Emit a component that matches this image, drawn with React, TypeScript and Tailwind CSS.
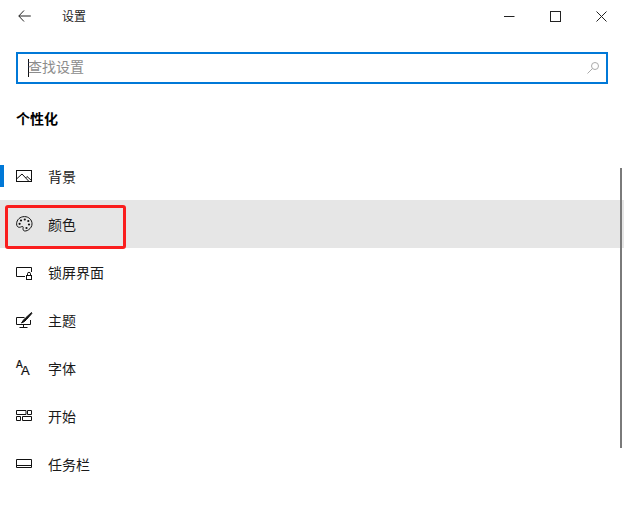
import type { ReactNode } from "react";

function Row({ label, active, selected, children }: { label: string; active?: boolean; selected?: boolean; children: ReactNode }) {
  return (
    <div className={`relative flex h-12 items-center pl-4 ${selected ? "bg-[#e6e6e6]" : ""}`}>
      {active && <div className="absolute left-0 top-[13px] h-[22px] w-1 bg-[#0078d7]" />}
      <svg width="16" height="16" viewBox="0 0 16 16" fill="none" stroke="#111" strokeWidth="1" className="shrink-0 overflow-visible">
        {children}
      </svg>
      <span className="ml-4 text-sm leading-5 text-[#1a1a1a]">{label}</span>
    </div>
  );
}

export default function App() {
  return (
    <div className="relative h-[511px] w-[624px] overflow-hidden bg-white font-['Noto_Sans_CJK_SC','Liberation_Sans',sans-serif]">
      <header className="flex h-8 items-center justify-between">
        <div className="flex items-center">
          <svg width="13" height="12" viewBox="0 0 13 12" fill="none" stroke="#222" strokeWidth="1" className="ml-[18px] mt-[-1px]">
            <path d="M6 .5 .8 6l5.200 5.500M.8 6h12" />
          </svg>
          <span className="ml-[31px] text-xs leading-4 text-[#222]">设置</span>
        </div>
        <div className="mr-[17px] flex items-center">
          <svg width="11" height="11" viewBox="0 0 11 11" fill="none" stroke="#222" strokeWidth="1">
            <path d="M0 5.500h10.500" />
          </svg>
          <svg width="11" height="11" viewBox="0 0 11 11" fill="none" stroke="#222" strokeWidth="1" className="ml-[35px]">
            <rect x=".5" y=".5" width="10" height="10" />
          </svg>
          <svg width="11" height="11" viewBox="0 0 11 11" fill="none" stroke="#222" strokeWidth="1" className="ml-[35px]">
            <path d="M.5.500l10 10M10.500.500l-10 10" />
          </svg>
        </div>
      </header>

      <div className="mx-4 mt-5 flex h-8 items-center border-2 border-[#0078d7] pl-[10px] pr-[7px]">
        <div className="h-[18px] w-px bg-[#111]" />
        <span className="-ml-px mb-1 flex-1 text-sm leading-5 text-[#8c8c8c]">查找设置</span>
        <svg width="12" height="12" viewBox="0 0 12 12" fill="none" stroke="#aaa" strokeWidth="1">
          <circle cx="8" cy="4" r="3.500" />
          <path d="M5.500 6.500 .5 11.500" />
        </svg>
      </div>

      <h2 className="ml-4 mt-6 text-sm font-bold leading-5 text-black">个性化</h2>

      <nav className="mt-6">
        <Row label="背景" active>
          <rect x=".5" y="2.500" width="15" height="11" />
          <path d="M.5 11 6 6l7 7.500M9.500 10 11 8.500l4.500 4" />
        </Row>
        <Row label="颜色" selected>
          <path d="M8.500.6C4 .6.600 3.800.600 7.800c0 2.300 1.100 3.500 2.700 3.500 1.800 0 2.500-1.200 3.500-.7 1 .6-.5 2.300.7 3.800 1 1.100 3.400.6 5.200-.7 2-1.400 3.300-3.500 3.300-5.800C16.100 3.900 12.800.6 8.500.6Z" />
          <circle cx="5" cy="4.500" r="1.100" fill="#111" stroke="none" />
          <circle cx="8.800" cy="3.500" r="1.100" fill="#111" stroke="none" />
          <circle cx="12.300" cy="5" r="1.100" fill="#111" stroke="none" />
          <circle cx="3.600" cy="7.800" r="1.100" fill="#111" stroke="none" />
          <circle cx="13" cy="8.500" r="1.100" fill="#111" stroke="none" />
          <circle cx="10.500" cy="12" r="1.100" fill="#111" stroke="none" />
        </Row>
        <Row label="锁屏界面">
          <path d="M9 12.500H.5v-9h15V8" />
          <rect x="10.500" y="11.500" width="5" height="4" />
          <path d="M11.500 11.500V9.800a1.500 1.500 0 0 1 3 0v1.700" />
        </Row>
        <Row label="主题">
          <path d="M8.500 5.500H.5v7h14V8M7.500 12.500v2.500M3.500 15.500h8" />
          <path d="M15.500.5 9.500 6 7.500 8 5.500 11 8.500 9.500 10.500 7.500 15.800 1.500Z" fill="#111" />
        </Row>
        <Row label="字体">
          <text x="0" y="8" fontSize="10" fontFamily="Liberation Sans" fill="#111" stroke="#111" strokeWidth=".2">A</text>
          <text x="5" y="15" fontSize="13" fontFamily="Liberation Sans" fill="#111" stroke="#111" strokeWidth=".2">A</text>
        </Row>
        <Row label="开始">
          <path d="M.5 2.500h9.500v4H.5zM11.500 2.500h4v4h-4zM.5 8.500h4v4h-4zM6.500 8.500h9v4h-9z" />
        </Row>
        <Row label="任务栏">
          <path d="M.5 3.500h15v8H.5zM.5 9.500h15" />
        </Row>
      </nav>

      <div className="absolute left-[620px] top-[168px] h-[280px] w-[2px] bg-[#7a7a7a]" />
      <div className="absolute left-[5px] top-[205px] h-[44px] w-[121px] rounded-[3px] border-[3px] border-[#fa1e1e]" />
    </div>
  );
}
